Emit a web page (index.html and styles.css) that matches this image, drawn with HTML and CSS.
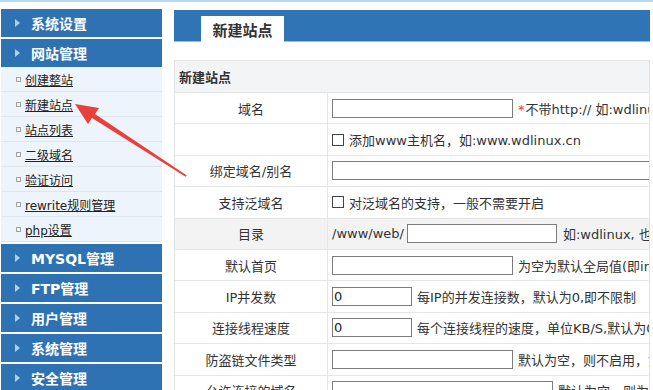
FILE: index.html
```html
<!DOCTYPE html>
<html lang="zh-CN">
<head>
    <meta charset="UTF-8">
    <title>新建站点</title>
    <link rel="stylesheet" href="styles.css">
</head>
<body>
    <div class="topline"></div>
    <div class="page">
        <div class="sidebar">
            <div class="menu-title">系统设置</div>
            <div class="menu-title open">网站管理</div>
            <ul class="menu-list">
                <li><a href="#">创建整站</a></li>
                <li><a href="#">新建站点</a></li>
                <li><a href="#">站点列表</a></li>
                <li><a href="#">二级域名</a></li>
                <li><a href="#">验证访问</a></li>
                <li><a href="#">rewrite规则管理</a></li>
                <li><a href="#">php设置</a></li>
            </ul>
            <div class="menu-title">MYSQL管理</div>
            <div class="menu-title">FTP管理</div>
            <div class="menu-title">用户管理</div>
            <div class="menu-title">系统管理</div>
            <div class="menu-title">安全管理</div>
        </div>

        <div class="main">
            <div class="tabbar">
                <div class="tab">新建站点</div>
            </div>

            <div class="form">
                <div class="form-head">新建站点</div>
                <div class="form-row">
                    <div class="form-label">域名</div>
                    <div class="form-field">
                        <input class="txt w-md" type="text">
                        <span class="hint"><span class="req">*</span>不带http:// 如:wdlinux.cn</span>
                    </div>
                </div>
                <div class="form-row">
                    <div class="form-label"></div>
                    <div class="form-field">
                        <input class="chk" type="checkbox">
                        <span>添加www主机名，如:www.wdlinux.cn</span>
                    </div>
                </div>
                <div class="form-row">
                    <div class="form-label">绑定域名/别名</div>
                    <div class="form-field">
                        <input class="txt w-xl" type="text">
                    </div>
                </div>
                <div class="form-row">
                    <div class="form-label">支持泛域名</div>
                    <div class="form-field">
                        <input class="chk" type="checkbox">
                        <span>对泛域名的支持，一般不需要开启</span>
                    </div>
                </div>
                <div class="form-row active">
                    <div class="form-label">目录</div>
                    <div class="form-field">
                        <span>/www/web/</span><input class="txt w-dir" type="text">
                        <span class="hint wide">如:wdlinux, 也可以是wdlinux.cn</span>
                    </div>
                </div>
                <div class="form-row">
                    <div class="form-label">默认首页</div>
                    <div class="form-field">
                        <input class="txt w-md" type="text">
                        <span class="hint">为空为默认全局值(即index.html)</span>
                    </div>
                </div>
                <div class="form-row">
                    <div class="form-label">IP并发数</div>
                    <div class="form-field">
                        <input class="txt w-sm" type="text" value="0">
                        <span class="hint">每IP的并发连接数，默认为0,即不限制</span>
                    </div>
                </div>
                <div class="form-row">
                    <div class="form-label">连接线程速度</div>
                    <div class="form-field">
                        <input class="txt w-sm" type="text" value="0">
                        <span class="hint">每个连接线程的速度，单位KB/S,默认为0</span>
                    </div>
                </div>
                <div class="form-row">
                    <div class="form-label">防盗链文件类型</div>
                    <div class="form-field">
                        <input class="txt w-md" type="text">
                        <span class="hint">默认为空，则不启用，如:jpg|gif</span>
                    </div>
                </div>
                <div class="form-row">
                    <div class="form-label">允许连接的域名</div>
                    <div class="form-field">
                        <input class="txt w-lg" type="text">
                        <span class="hint">默认为空，则为当前域名</span>
                    </div>
                </div>
            </div>
        </div>
    </div>

    <svg class="arrow" width="653" height="390" viewBox="0 0 653 390">
        <polygon points="75,104 99,108 95,114 186.5,175.3 185.6,176.8 92,118 88,124" fill="#e8413b"/>
    </svg>
</body>
</html>
```

FILE: styles.css
```css
body {
    margin: 0;
    width: 653px;
    height: 390px;
    overflow: hidden;
    background-color: #fff;
    font-family: "DejaVu Sans", "Noto Sans CJK SC", sans-serif;
    font-size: 13px;
    color: #333;
    position: relative;
}

.topline {
    height: 2px;
    background-color: #b6d9f5;
}

.page {
    display: flex;
    align-items: flex-start;
}

/* left menu */
.sidebar {
    width: 161px;
    margin: 7px 0 0 1px;
}

.menu-title {
    height: 28px;
    margin-bottom: 2px;
    padding-left: 14px;
    display: flex;
    align-items: center;
    background-color: #2f72b3;
    color: #fff;
    font-size: 14px;
    font-weight: bold;
}

.menu-title::before {
    content: "";
    width: 0;
    height: 0;
    border-left: 5px solid #a6d4f7;
    border-top: 4px solid transparent;
    border-bottom: 4px solid transparent;
    margin-right: 11px;
}

.menu-title.open {
    margin-bottom: 0;
}

.menu-list {
    list-style: none;
    margin: 0 0 2px 0;
    padding: 0;
}

.menu-list li {
    height: 24px;
    border-bottom: 1px solid #dce6f1;
    background-color: #eef4fb;
    padding-left: 15px;
    display: flex;
    align-items: center;
    font-size: 12px;
}

.menu-list li::before {
    content: "";
    width: 3px;
    height: 3px;
    border: 1px solid #a3a3a3;
    margin-right: 4px;
}

.menu-list a {
    color: #222;
    text-decoration: underline;
}

/* main area */
.main {
    width: 476px;
    margin: 8px 0 0 12px;
    overflow: hidden;
}

.tabbar {
    height: 32px;
    background-color: #2f74b5;
    border-bottom: 1px solid #8cc3ec;
    display: flex;
    align-items: flex-end;
    padding-left: 27px;
    box-sizing: border-box;
}

.tab {
    width: 83px;
    height: 26px;
    margin-bottom: -1px;
    background-color: #fff;
    display: flex;
    align-items: center;
    justify-content: center;
    font-size: 15px;
    font-weight: bold;
    color: #333;
}

.form {
    margin-top: 18px;
    border: 1px solid #e3e3e3;
    border-bottom: none;
}

.form-head {
    height: 31px;
    padding-left: 4px;
    display: flex;
    align-items: center;
    background-color: #f3f4f6;
    border-bottom: 1px solid #e3e3e3;
    font-weight: bold;
}

.form-row {
    display: grid;
    grid-template-columns: 153px 1fr;
    height: 31.4px;
    box-sizing: border-box;
    border-bottom: 1px solid #e6e6e6;
}

.form-row.active {
    background-color: #f3f3f3;
}

.form-label {
    border-right: 1px solid #e6e6e6;
    display: flex;
    align-items: center;
    justify-content: center;
}

.form-field {
    padding-left: 4px;
    display: flex;
    align-items: center;
    white-space: nowrap;
    overflow: hidden;
}

.txt {
    height: 19px;
    box-sizing: border-box;
    border: 1px solid #7c7c7c;
    padding: 0 1px;
    margin: 0;
    font-family: inherit;
    font-size: 13px;
    color: #222;
    background-color: #fff;
    flex-shrink: 0;
}

.w-sm { width: 80px; }
.w-md { width: 181px; }
.w-dir { width: 150px; margin-left: 3px; }
.w-lg { width: 221px; }
.w-xl { width: 340px; }

.hint {
    margin-left: 5px;
}

.hint.wide {
    margin-left: 6px;
}

.req {
    color: #e33;
    margin-right: 1px;
}

.chk {
    appearance: none;
    width: 12px;
    height: 12px;
    margin: 0 5px 0 0;
    border: 1px solid #444;
    background-color: #fff;
    flex-shrink: 0;
}

.arrow {
    position: absolute;
    top: 0;
    left: 0;
    pointer-events: none;
}
```
